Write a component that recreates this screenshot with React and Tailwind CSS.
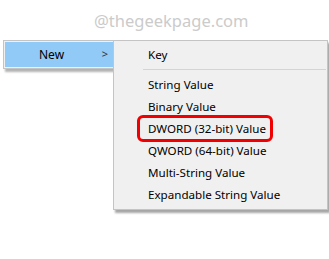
import React from 'react';

const items = [
  'String Value',
  'Binary Value',
  'DWORD (32-bit) Value',
  'QWORD (64-bit) Value',
  'Multi-String Value',
  'Expandable String Value',
];

const App = () => {
  return (
    <div
      className="w-[329px] h-[259px] bg-white overflow-hidden"
      style={{ fontFamily: '"Segoe UI", "Noto Sans", "Liberation Sans", sans-serif' }}
    >
      {/* watermark */}
      <div className="h-[40px] pt-[10px] pl-[94px] text-[16.5px] leading-[22px] text-[#cbcbcb]">
        @thegeekpage.com
      </div>

      <div className="flex items-start pl-[3px]">
        {/* parent menu */}
        <div className="w-[110px] h-[29px] border border-[#c4c4c4] border-r-0 bg-[#f0f0f0] pl-[1px] py-[1px] shadow-[2px_3px_2px_rgba(0,0,0,0.3)]">
          <div className="h-full bg-[#91c9f7] flex items-center text-[12px] text-black">
            <span className="ml-[34px]">New</span>
            <span className="ml-auto mr-[5px] text-[11px] text-[#333]">&gt;</span>
          </div>
        </div>

        {/* submenu */}
        <div className="relative w-[215px] h-[170px] border border-[#c4c4c4] bg-[#f0f0f0] pt-[3px] shadow-[2px_3px_2px_rgba(0,0,0,0.35)] text-[11.6px] text-black">
          <div className="h-[22px] leading-[22px] pl-[34px]">Key</div>
          <div className="ml-[29px] mr-[1px] mt-[3px] mb-[4px] h-px bg-[#d4d4d4]" />
          {items.map((label) => (
            <div key={label} className="h-[22px] leading-[22px] pl-[34px]">
              {label}
            </div>
          ))}
          {/* highlight annotation */}
          <div className="absolute left-[23px] top-[74px] w-[136px] h-[27px] border-[3px] border-[#f00000] rounded-[6px]" />
        </div>
      </div>
    </div>
  );
};

export default App;
